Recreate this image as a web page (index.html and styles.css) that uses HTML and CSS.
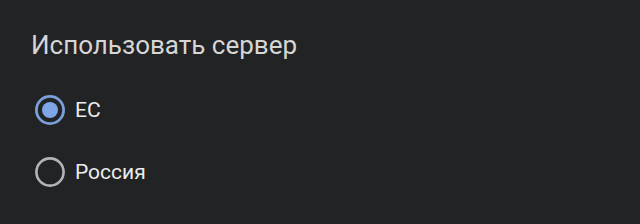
FILE: index.html
```html
<!DOCTYPE html>
<html lang="ru">
<head>
  <meta charset="UTF-8" />
  <title>Сервер</title>
  <link rel="stylesheet" href="styles.css">
</head>
<body>

  <div class="dialog">
    <h2 class="title">Использовать сервер</h2>

    <div class="options">
      <label class="option checked">
        <svg class="radio" width="32" height="32" viewBox="0 0 32 32">
          <circle cx="16" cy="16" r="13.6" fill="none" stroke="#7b9fd9" stroke-width="2.8" />
          <circle cx="16" cy="16" r="8" fill="#7ea5e6" />
        </svg>
        <span>ЕС</span>
      </label>

      <label class="option">
        <svg class="radio" width="32" height="32" viewBox="0 0 32 32">
          <circle cx="16" cy="16" r="13.6" fill="none" stroke="#b4b4b4" stroke-width="2.6" />
        </svg>
        <span>Россия</span>
      </label>
    </div>
  </div>

</body>
</html>
```

FILE: styles.css
```css
body {
  margin: 0;
  background: #222325;
  font-family: Roboto, "Noto Sans", sans-serif;
}

.dialog {
  padding: 28px 0 0 31px;
}

.title {
  margin: 0 0 17px;
  font-size: 26px;
  font-weight: normal;
  line-height: 34px;
  color: #d6d6d6;
}

.options {
  display: flex;
  flex-direction: column;
  padding-left: 3px;
}

.option {
  display: flex;
  align-items: center;
  gap: 9px;
  height: 62px;
  font-size: 21px;
  color: #ececec;
  cursor: pointer;
}

.radio {
  flex-shrink: 0;
}
```
